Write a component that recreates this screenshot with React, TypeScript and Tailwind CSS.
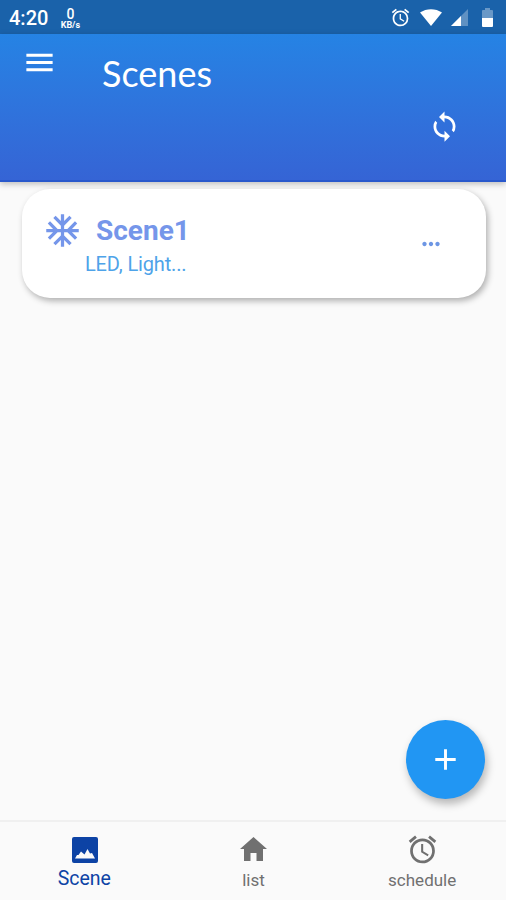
import { MdAcUnit, MdAdd, MdAlarm, MdLoop, MdMenu, MdMoreHoriz } from "react-icons/md";

function StatusBar() {
  return (
    <div className="flex h-[34px] items-center bg-[#1a62aa] pl-[9px] pr-[13px] text-white">
      <span className="mt-[2px] text-[20px] font-medium leading-none">4:20</span>
      <div className="ml-[10px] mt-[3px] flex w-[24px] flex-col items-center">
        <span className="text-[14px] font-medium leading-[14px]">0</span>
        <span className="text-[9px] font-bold leading-[9px]">KB/s</span>
      </div>
      <div className="ml-auto flex items-center">
        <MdAlarm size={21} />
        <svg className="ml-[9px]" width="22" height="17" viewBox="0 0 22 17" fill="currentColor">
          <path d="M0 3.500C6.500-1 15.500-1 22 3.500L11 17z" />
        </svg>
        <svg className="ml-[9px]" width="17" height="17" viewBox="0 0 17 17" fill="currentColor">
          <path d="M0 17L17 0v17z" opacity=".3" />
          <path d="M0 17L10 7v10z" />
        </svg>
        <svg className="ml-[14px]" width="11" height="19" viewBox="0 0 11 19" fill="currentColor">
          <path d="M0 3q0-1 1-1h2V0h5v2h2q1 0 1 1v7H0z" opacity=".35" />
          <path d="M0 10h11v8q0 1-1 1H1q-1 0-1-1z" />
        </svg>
      </div>
    </div>
  );
}

function Header() {
  return (
    <header className="h-[148px] border-b-2 border-[#2858cc] bg-gradient-to-b from-[#2583e4] to-[#3564d5] text-white shadow-[0_2px_6px_rgba(0,0,0,0.25)]">
      <div className="flex items-start pl-[22px] pt-[11px]">
        <MdMenu size={35} />
        <h1 className="ml-[45px] mt-[8px] font-['Lato'] text-[36px] leading-[40px]">Scenes</h1>
      </div>
      <div className="mt-[17px] flex justify-end pr-[45px]">
        <MdLoop size={33} />
      </div>
    </header>
  );
}

function SceneCard() {
  return (
    <div className="ml-[22px] mr-[20px] mt-[7px] flex h-[109px] rounded-[28px] bg-white pl-[21px] pr-[42px] shadow-[2px_3px_6px_rgba(0,0,0,0.3)]">
      <div className="pt-[22px]">
        <div className="flex items-center text-[#7596ea]">
          <MdAcUnit size={39} />
          <span className="ml-[14px] text-[28px] font-bold leading-[39px]">Scene1</span>
        </div>
        <p className="ml-[42px] mt-[2px] text-[20px] leading-[24px] tracking-[-0.15px] text-[#4ea3e9]">LED, Light...</p>
      </div>
      <MdMoreHoriz className="ml-auto mt-[42px] text-[#6d96e4]" size={26} />
    </div>
  );
}

function BottomNav() {
  return (
    <nav className="grid h-[80px] grid-cols-3 border-t-2 border-[#f0f0f0] bg-[#fafafa] text-[#707070]">
      <div className="flex flex-col items-center pt-[15px] text-[#0d43a5]">
        <svg className="ml-[1px]" width="26" height="26" viewBox="0 0 26 26" fill="currentColor" fillRule="evenodd">
          <path d="M2 0h22q2 0 2 2v22q0 2-2 2H2q-2 0-2-2V2q0-2 2-2zM3 21.500h20L20 16l-2 .5L15.500 12l-3 5.500L9 14.500 6.500 18 5 18z" />
        </svg>
        <span className="mt-[4px] text-[19.500px] leading-[23px]">Scene</span>
      </div>
      <div className="flex flex-col items-center pt-[15px] pl-[1px]">
        <svg width="27" height="24" viewBox="0 0 27 24" fill="currentColor">
          <path d="M13.500 0L27 12h-4v12h-6.500v-8h-6v8H4V12H0z" />
        </svg>
        <span className="mt-[9px] text-[17px] leading-[20px]">list</span>
      </div>
      <div className="flex flex-col items-center pt-[11px] pl-[1px]">
        <MdAlarm size={33} />
        <span className="mt-[4px] text-[17px] leading-[20px]">schedule</span>
      </div>
    </nav>
  );
}

export default function App() {
  return (
    <div className="relative flex h-[900px] w-[506px] flex-col overflow-hidden bg-[#fafafa] font-['Roboto',sans-serif]">
      <StatusBar />
      <Header />
      <main className="flex-1">
        <SceneCard />
      </main>
      <button className="absolute bottom-[101px] right-[21px] flex size-[79px] items-center justify-center rounded-full bg-[#2196f3] text-white shadow-[2px_5px_9px_rgba(0,0,0,0.28)]">
        <MdAdd size={35} />
      </button>
      <BottomNav />
    </div>
  );
}
